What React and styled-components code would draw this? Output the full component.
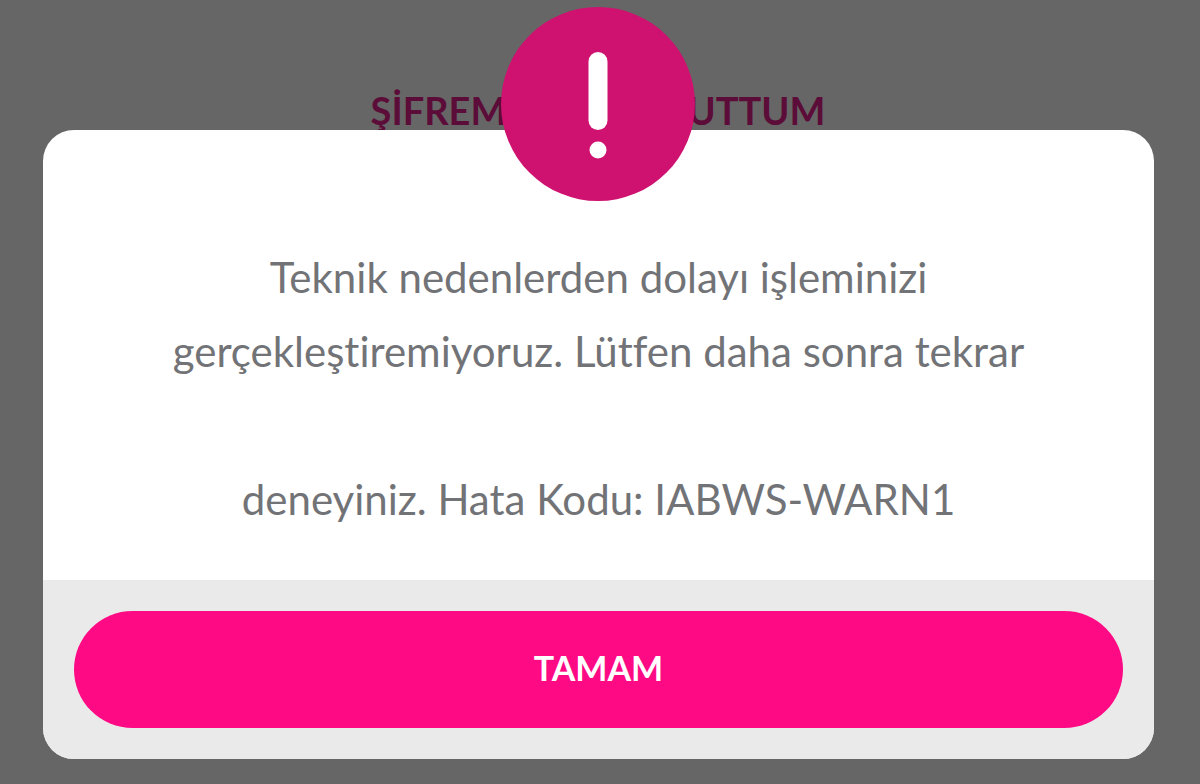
import React from "react";
import styled, { createGlobalStyle } from "styled-components";

const GlobalStyle = createGlobalStyle`
  * { box-sizing: border-box; }
  body {
    margin: 0;
    background: #ffffff;
    font-family: Lato, "Liberation Sans", sans-serif;
    font-variant-ligatures: none;
  }
`;

const Page = styled.div`
  position: relative;
  min-height: 100vh;
`;

const Screen = styled.main`
  padding: 86px 44px 0 40px;
  text-align: center;
`;

const ForgotLink = styled.a`
  display: inline-block;
  color: #e61e8c;
  font-size: 38px;
  line-height: 48px;
  font-weight: 700;
  text-decoration: none;
  white-space: nowrap;
`;

const Overlay = styled.div`
  position: absolute;
  inset: 0;
  padding: 130px 46px 24px 43px;
  background: rgba(0, 0, 0, 0.6);
`;

const Dialog = styled.section`
  position: relative;
  border-radius: 31px;
  background: #ffffff;
`;

const Badge = styled.svg`
  position: absolute;
  top: -123px;
  left: 50%;
  width: 194px;
  height: 194px;
  margin-left: -98px;
`;

const Message = styled.p`
  margin: 0;
  padding: 110px 40px 44px;
  color: #727377;
  font-size: 42px;
  line-height: 74px;
  text-align: center;
`;

const Footer = styled.footer`
  padding: 31px;
  border-radius: 0 0 31px 31px;
  background: #eaeaea;
`;

const ConfirmButton = styled.button`
  display: block;
  width: 100%;
  height: 117px;
  padding: 0 0 4px;
  border: 0;
  border-radius: 59px;
  background: #ff0a85;
  color: #ffffff;
  font-family: inherit;
  font-size: 34px;
  font-weight: 700;
  cursor: pointer;
`;

export default function App() {
  return (
    <Page lang="tr">
      <GlobalStyle />
      <Screen>
        <ForgotLink href="#sifre">ŞİFREM YOK / UNUTTUM</ForgotLink>
      </Screen>
      <Overlay>
        <Dialog role="alertdialog" aria-modal="true" aria-describedby="message">
          <Badge viewBox="0 0 194 194" aria-hidden="true">
            <circle cx="97" cy="97" r="97" fill="#cf1170" />
            <rect x="87.5" y="45" width="19" height="78" rx="9.5" fill="#fff" />
            <circle cx="97" cy="143" r="8.5" fill="#fff" />
          </Badge>
          <Message id="message">
            Teknik nedenlerden dolayı işleminizi
            <br />
            gerçekleştiremiyoruz. Lütfen daha sonra tekrar
            <br />
            <br />
            deneyiniz. Hata Kodu: IABWS-WARN1
          </Message>
          <Footer>
            <ConfirmButton type="button">TAMAM</ConfirmButton>
          </Footer>
        </Dialog>
      </Overlay>
    </Page>
  );
}
